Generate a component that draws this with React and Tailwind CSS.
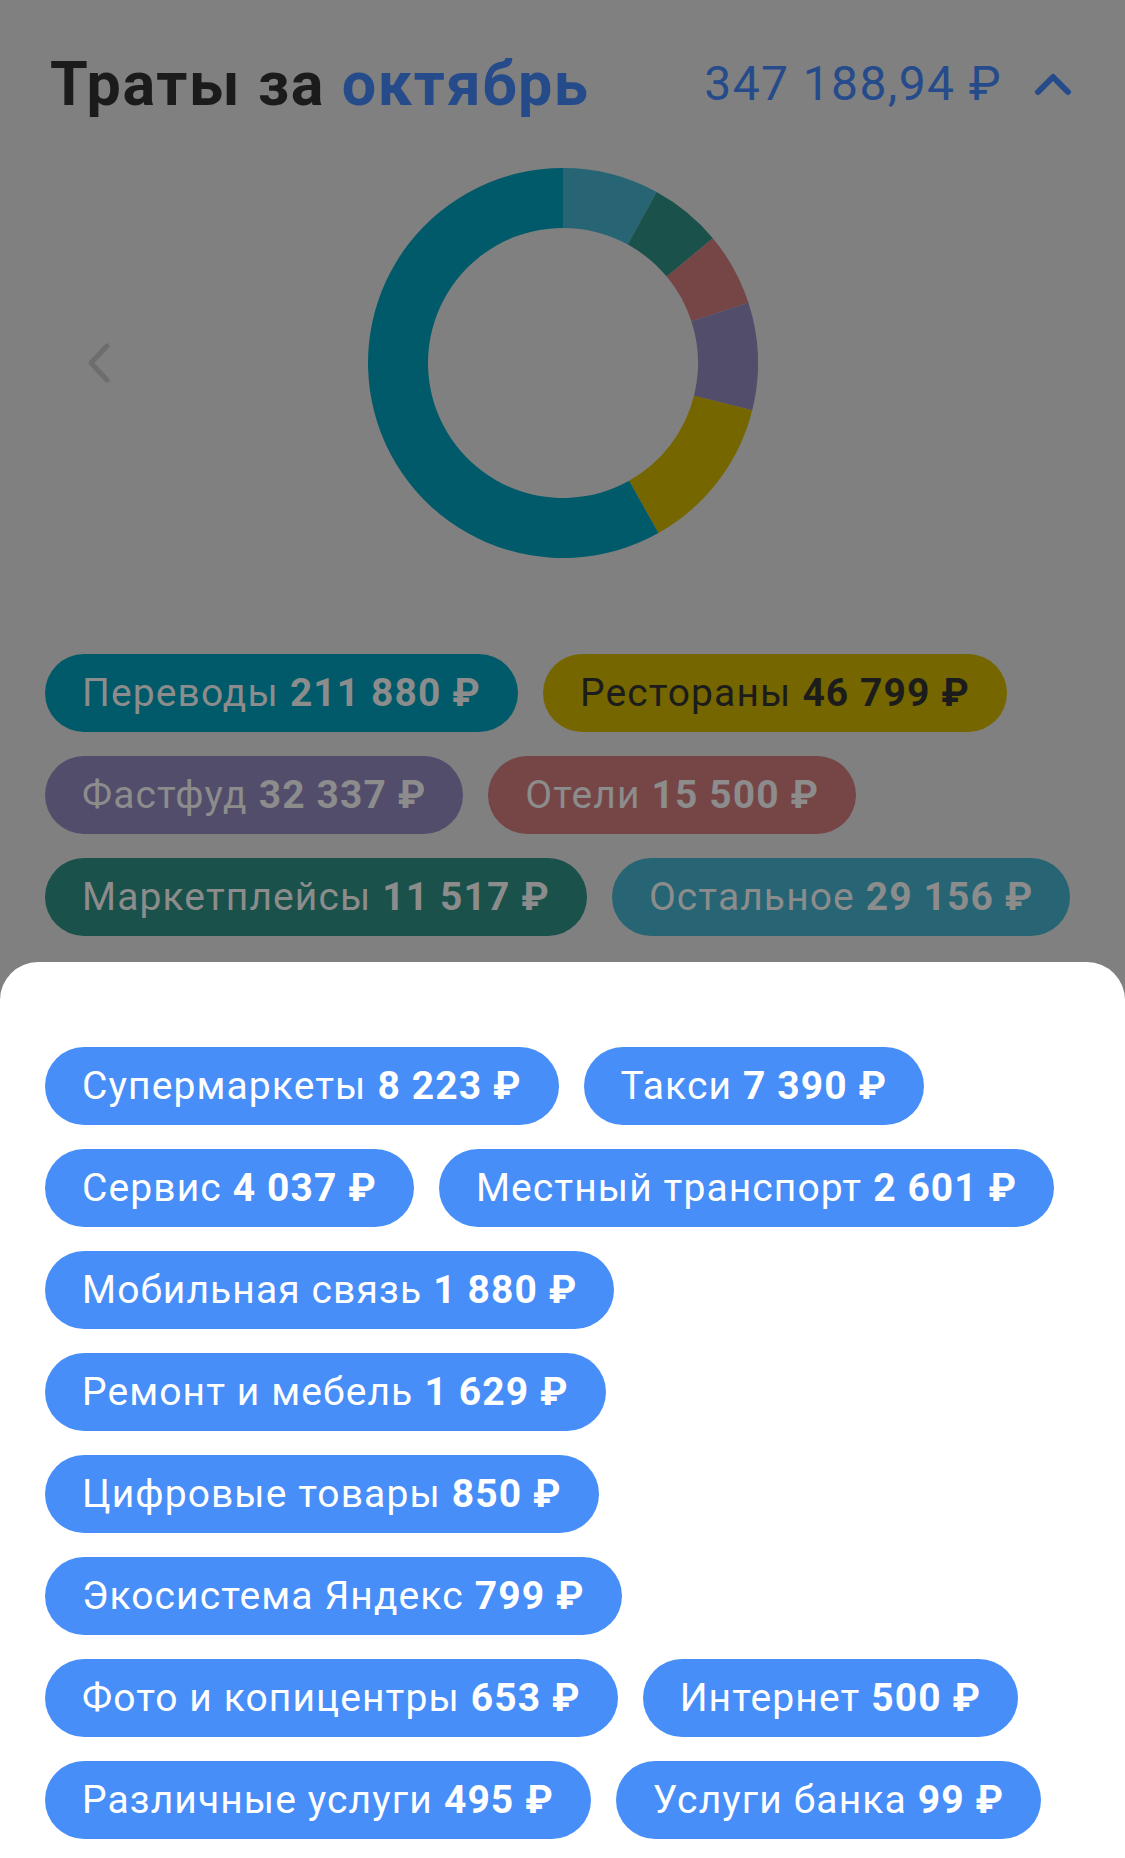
import React from 'react';

const topCategories = [
  { name: 'Переводы', amount: '211 880 ₽', bg: 'bg-[#005a69]', text: 'text-[#8c8c8c]' },
  { name: 'Рестораны', amount: '46 799 ₽', bg: 'bg-[#756600]', text: 'text-[#1c1c1c]' },
  { name: 'Фастфуд', amount: '32 337 ₽', bg: 'bg-[#524d6b]', text: 'text-[#8c8c8c]' },
  { name: 'Отели', amount: '15 500 ₽', bg: 'bg-[#764646]', text: 'text-[#8c8c8c]' },
  { name: 'Маркетплейсы', amount: '11 517 ₽', bg: 'bg-[#1a514b]', text: 'text-[#8c8c8c]' },
  { name: 'Остальное', amount: '29 156 ₽', bg: 'bg-[#276574]', text: 'text-[#8c8c8c]' },
];

const otherCategories = [
  { name: 'Супермаркеты', amount: '8 223 ₽' },
  { name: 'Такси', amount: '7 390 ₽' },
  { name: 'Сервис', amount: '4 037 ₽' },
  { name: 'Местный транспорт', amount: '2 601 ₽' },
  { name: 'Мобильная связь', amount: '1 880 ₽' },
  { name: 'Ремонт и мебель', amount: '1 629 ₽' },
  { name: 'Цифровые товары', amount: '850 ₽' },
  { name: 'Экосистема Яндекс', amount: '799 ₽' },
  { name: 'Фото и копицентры', amount: '653 ₽' },
  { name: 'Интернет', amount: '500 ₽' },
  { name: 'Различные услуги', amount: '495 ₽' },
  { name: 'Услуги банка', amount: '99 ₽' },
];

// angles in degrees, clockwise from 12 o'clock
const segments = [
  { from: 0, to: 28.7, color: '#276574' },
  { from: 28.7, to: 50.2, color: '#1a514b' },
  { from: 50.2, to: 72, color: '#764646' },
  { from: 72, to: 104, color: '#524d6b' },
  { from: 104, to: 150.7, color: '#756600' },
  { from: 150.7, to: 360, color: '#005a69' },
];

const arcPath = (from, to, r1, r2, c) => {
  const pt = (a, r) => {
    const rad = ((a - 90) * Math.PI) / 180;
    return [c + r * Math.cos(rad), c + r * Math.sin(rad)];
  };
  const large = to - from > 180 ? 1 : 0;
  const [x1, y1] = pt(from, r2);
  const [x2, y2] = pt(to, r2);
  const [x3, y3] = pt(to, r1);
  const [x4, y4] = pt(from, r1);
  return `M${x1} ${y1} A${r2} ${r2} 0 ${large} 1 ${x2} ${y2} L${x3} ${y3} A${r1} ${r1} 0 ${large} 0 ${x4} ${y4} Z`;
};

const Donut = () => (
  <svg width="390" height="390" viewBox="0 0 390 390">
    {segments.map((s, i) => (
      <path key={i} d={arcPath(s.from, s.to, 135, 195, 195)} fill={s.color} />
    ))}
  </svg>
);

const Chip = ({ name, amount, className }) => (
  <div className={`h-[78px] px-[37px] rounded-full flex items-center text-[39px] tracking-[1.1px] leading-none whitespace-nowrap ${className}`}>
    <span>{name}</span>
    <span className="font-bold ml-[11px]">{amount}</span>
  </div>
);

export default function App() {
  return (
    <div className="w-[1125px] min-h-[1858px] bg-[#808080] flex flex-col font-['Roboto','Noto_Sans',sans-serif]">
      <div className="flex items-center justify-between pl-[50px] pr-[53px] pt-[44px] h-[124px]">
        <h1 className="text-[61px] font-bold leading-none tracking-[1.6px] text-[#1b1b1b]">
          Траты за <span className="text-[#264b8a]">октябрь</span>
        </h1>
        <div className="flex items-center gap-[32px] text-[#264b8a]">
          <span className="text-[48px] leading-none tracking-[1.4px]">347 188,94 ₽</span>
          <svg width="38" height="24" viewBox="0 0 38 24" fill="none">
            <path d="M4 20 L19 5 L34 20" stroke="#264b8a" strokeWidth="6" strokeLinecap="round" strokeLinejoin="round" />
          </svg>
        </div>
      </div>

      <div className="grid grid-cols-[1fr_390px_1fr] mt-[44px]">
        <div className="flex items-center pl-[86px]">
          <svg width="26" height="40" viewBox="0 0 26 40" fill="none">
            <path d="M21 3 L5 20 L21 37" stroke="#6d6d6d" strokeWidth="5" strokeLinecap="round" strokeLinejoin="round" />
          </svg>
        </div>
        <Donut />
        <div />
      </div>

      <div className="flex flex-wrap gap-x-[25px] gap-y-[24px] px-[45px] mt-[96px]">
        {topCategories.map((c) => (
          <Chip key={c.name} name={c.name} amount={c.amount} className={`${c.bg} ${c.text}`} />
        ))}
      </div>

      <div className="flex-1 mt-[26px] bg-white rounded-t-[38px] px-[45px] pt-[85px] pb-[20px]">
        <div className="flex flex-wrap gap-x-[25px] gap-y-[24px]">
          {otherCategories.map((c) => (
            <Chip key={c.name} name={c.name} amount={c.amount} className="bg-[#478ef8] text-white" />
          ))}
        </div>
      </div>
    </div>
  );
}
